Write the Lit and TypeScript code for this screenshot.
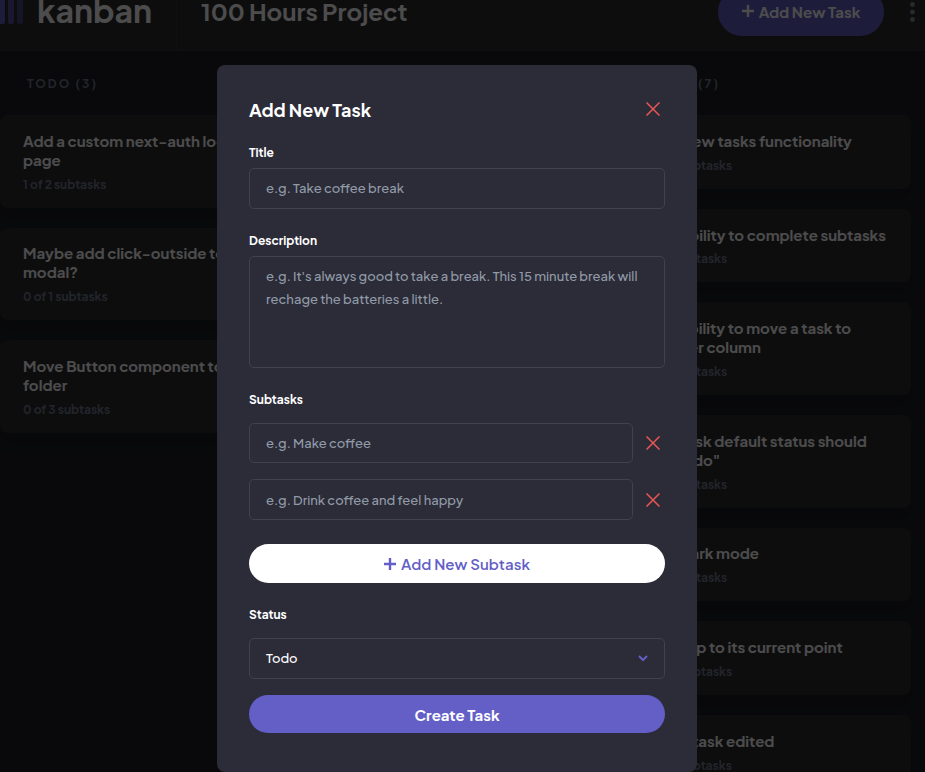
import { LitElement, html, css, svg } from "lit";
import { customElement, property } from "lit/decorators.js";

interface Line {
  text: string;
  indent: number;
}
interface Task {
  lines: Line[];
  sub: string;
}
interface Column {
  name: string;
  tasks: Task[];
}

const line = (text: string, indent = 0): Line => ({ text, indent });

const COLUMNS: Column[] = [
  {
    name: "TODO (3)",
    tasks: [
      { lines: [line("Add a custom next-auth login"), line("page")], sub: "1 of 2 subtasks" },
      { lines: [line("Maybe add click-outside to"), line("modal?")], sub: "0 of 1 subtasks" },
      { lines: [line("Move Button component to"), line("folder")], sub: "0 of 3 subtasks" },
    ],
  },
  { name: "", tasks: [] },
  {
    name: "DONE (7)",
    tasks: [
      { lines: [line("Add new tasks functionality", 4)], sub: "3 of 3 subtasks" },
      { lines: [line("Add ability to complete subtasks", 1)], sub: "1 of 1 subtasks" },
      { lines: [line("Add ability to move a task to", 0.5), line("another column", 0.5)], sub: "1 of 1 subtasks" },
      { lines: [line("New task default status should", -2), line('be "Todo"', 0.5)], sub: "1 of 1 subtasks" },
      { lines: [line("Add dark mode", 1)], sub: "1 of 1 subtasks" },
      { lines: [line("Get app to its current point", 1)], sub: "3 of 3 subtasks" },
      { lines: [line("Make task edited", 3.5)], sub: "2 of 2 subtasks" },
    ],
  },
];

const plus = svg`<path d="M6 0V12M0 6H12" fill="none" stroke="currentColor" stroke-width="2.4"/>`;

@customElement("close-icon")
class CloseIcon extends LitElement {
  static styles = css`
    :host { display: block; width: 14px; height: 14px; }
    svg { display: block; }
    path { stroke: #ea5555; stroke-width: 1.5; fill: none; }
  `;
  render() {
    return html`<svg width="14" height="14" viewBox="0 0 14 14"><path d="M0.5 0.5L13.5 13.5M13.5 0.5L0.5 13.5" /></svg>`;
  }
}

@customElement("task-card")
class TaskCard extends LitElement {
  @property({ attribute: false }) task!: Task;
  static styles = css`
    :host {
      display: block;
      box-sizing: border-box;
      padding: 16.9px 0 15.8px 23px;
      border-radius: 8px;
      background: #2c2c31;
      box-shadow: 0 10px 15px -3px rgba(0, 0, 0, 0.15);
      white-space: nowrap;
    }
    .line { font-size: 15px; font-weight: 700; line-height: 18.9px; color: #fff; }
    .sub { margin-top: 7px; font-size: 12px; font-weight: 700; line-height: 15.1px; color: #727b8e; }
  `;
  render() {
    return html`
      ${this.task.lines.map((l) => html`<div class="line" style="text-indent:${l.indent}px">${l.text}</div>`)}
      <div class="sub">${this.task.sub}</div>
    `;
  }
}

@customElement("task-dialog")
class TaskDialog extends LitElement {
  static styles = css`
    :host {
      display: flex;
      flex-direction: column;
      box-sizing: border-box;
      width: 480px;
      height: 707px;
      padding: 33px 32px 0;
      border-radius: 8px;
      background: #2c2c38;
      color: #fff;
    }
    .head { display: flex; justify-content: space-between; height: 24px; padding-right: 5px; }
    .head close-icon { margin-top: 4px; }
    h2 { margin: 0; font-size: 18px; line-height: 23px; font-weight: 700; }
    .label { margin-top: 24px; font-size: 12px; font-weight: 700; line-height: 16px; }
    .label.title { margin-top: 23px; }
    .field {
      box-sizing: border-box;
      height: 41px;
      margin-top: 7px;
      padding: 0 16px;
      border: 1px solid #41424f;
      border-radius: 5px;
      font-size: 13px;
      font-weight: 500;
      line-height: 39px;
      color: #919ba8;
      white-space: nowrap;
    }
    .area { height: 112px; padding-top: 8px; line-height: 23px; }
    .row { display: flex; align-items: center; justify-content: space-between; padding-right: 5px; margin-top: 16px; }
    .row .field { width: 384px; margin-top: 0; line-height: 40px; }
    .row.first { margin-top: 15px; }
    .row.first .field { height: 40px; line-height: 38px; }
    .pill {
      display: flex;
      align-items: center;
      justify-content: center;
      box-sizing: border-box;
      height: 39px;
      border-radius: 20px;
      font-size: 15px;
      font-weight: 700;
    }
    .add { margin-top: 24px; gap: 5px; background: #fff; color: #635fc7; font-weight: 600; letter-spacing: 0.08px; }
    .create { margin-top: 16px; height: 38px; padding-top: 1px; background: #635fc7; }
    .select { display: flex; align-items: center; justify-content: space-between; margin-top: 15px; color: #fff; }
  `;
  render() {
    return html`
      <div class="head"><h2>Add New Task</h2><close-icon></close-icon></div>
      <div class="label title">Title</div>
      <div class="field">e.g. Take coffee break</div>
      <div class="label">Description</div>
      <div class="field area">
        <div>e.g. It's always good to take a break. This 15 minute break will</div>
        <div>rechage the batteries a little.</div>
      </div>
      <div class="label">Subtasks</div>
      <div class="row first"><div class="field">e.g. Make coffee</div><close-icon></close-icon></div>
      <div class="row"><div class="field">e.g. Drink coffee and feel happy</div><close-icon></close-icon></div>
      <div class="pill add"><svg width="12" height="12" viewBox="0 0 12 12">${plus}</svg><span>Add New Subtask</span></div>
      <div class="label">Status</div>
      <div class="field select">
        <span>Todo</span>
        <svg width="10" height="7" viewBox="0 0 10 7"><path d="M1 1L5 5L9 1" fill="none" stroke="#635fc7" stroke-width="2" /></svg>
      </div>
      <div class="pill create">Create Task</div>
    `;
  }
}

@customElement("app-root")
class AppRoot extends LitElement {
  static styles = css`
    :host {
      display: block;
      position: relative;
      width: 925px;
      height: 772px;
      overflow: hidden;
      background: #1e1f26;
      font-family: "Plus Jakarta Sans", Inter, sans-serif;
      color: #fff;
    }
    header {
      display: flex;
      align-items: center;
      box-sizing: border-box;
      height: 78px;
      margin-top: -27px;
      background: #2c2c31;
      border-bottom: 1px solid #30313a;
    }
    .brand { display: flex; align-items: center; box-sizing: border-box; width: 177px; height: 100%; border-right: 1px solid #3a3b42; }
    .bars { display: flex; gap: 3px; margin-left: -1px; width: 24px; margin-right: 14px; }
    .bars i { width: 6px; height: 25px; border-radius: 2px; background: #635fc7; }
    .bars i:nth-child(2) { opacity: 0.75; }
    .bars i:nth-child(3) { opacity: 0.5; }
    .word { margin-top: -3px; font-size: 32px; font-weight: 700; line-height: 24px; }
    h1 { flex: 1; margin: -1px 0 0 24px; font-size: 24px; line-height: 23px; font-weight: 700; }
    .new { display: flex; align-items: center; justify-content: center; gap: 5px; width: 166px; height: 48px; border-radius: 24px; background: #635fc7; font-size: 15px; font-weight: 700; }
    .new svg { margin-top: -1px; }
    .dots { margin: 0 10px 0 26px; }
    .board { display: grid; grid-template-columns: repeat(3, 287.6px); gap: 24px; }
    .column { display: flex; flex-direction: column; gap: 20px; }
    .name { height: 15px; margin: 25px 0 4px 27px; font-size: 12px; line-height: 15px; font-weight: 700; letter-spacing: 2.05px; color: #727b8e; }
    .overlay { position: absolute; inset: 0; display: flex; justify-content: center; align-items: flex-start; box-sizing: border-box; padding: 65px 11px 0 0; background: rgba(0, 0, 0, 0.7); }
  `;
  render() {
    return html`
      <header>
        <div class="brand">
          <div class="bars"><i></i><i></i><i></i></div>
          <span class="word">kanban</span>
        </div>
        <h1>100 Hours Project</h1>
        <div class="new"><svg width="12" height="12" viewBox="0 0 12 12">${plus}</svg><span>Add New Task</span></div>
        <svg class="dots" width="5" height="20" viewBox="0 0 5 20" fill="#828fa3">
          <circle cx="2.5" cy="2.5" r="2.4" /><circle cx="2.5" cy="10" r="2.4" /><circle cx="2.5" cy="17.5" r="2.4" />
        </svg>
      </header>
      <div class="board">
        ${COLUMNS.map(
          (c) => html`<section class="column">
            <div class="name">${c.name}</div>
            ${c.tasks.map((t) => html`<task-card .task=${t}></task-card>`)}
          </section>`
        )}
      </div>
      <div class="overlay"><task-dialog></task-dialog></div>
    `;
  }
}
